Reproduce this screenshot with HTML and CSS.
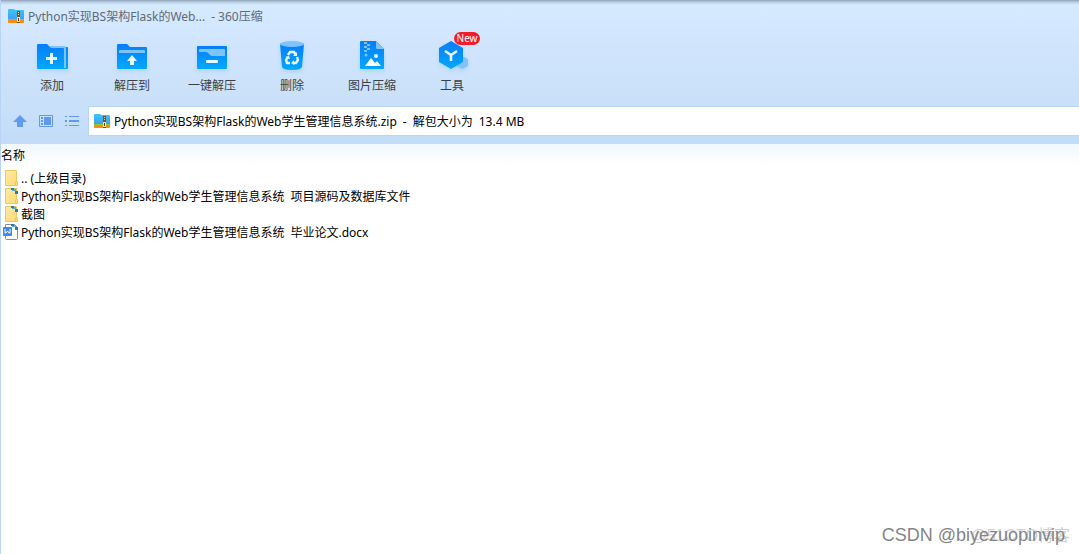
FILE: index.html
```html
<!DOCTYPE html>
<html lang="zh-CN">
<head>
<meta charset="utf-8">
<title>360压缩</title>
<link rel="stylesheet" href="styles.css">
</head>
<body>
<svg class="defs" aria-hidden="true">
  <defs>
    <linearGradient id="blue" x1="0" y1="0" x2="0" y2="1"><stop offset="0" stop-color="#087dfa"/><stop offset="1" stop-color="#00a8ff"/></linearGradient>
    <linearGradient id="sky" x1="0" y1="0" x2="0" y2="1"><stop offset="0" stop-color="#3fc4fa"/><stop offset="1" stop-color="#3b9df0"/></linearGradient>
    <linearGradient id="yellow" x1="0" y1="0" x2="1" y2="1"><stop offset="0" stop-color="#ffeaa5"/><stop offset="1" stop-color="#ffda72"/></linearGradient>
    <symbol id="archive" viewBox="0 0 16 16">
      <path d="M0 2q0-1 1-1h5l1 1h8q1 0 1 1v9H0z" fill="url(#sky)"/>
      <path d="M0 11h16v1H0z" fill="#8fca2c"/><path d="M0 12h16v2q0 1-1 1H1q-1 0-1-1z" fill="#f68b16"/>
      <path d="M9 3h3v12H9z" fill="#8a5018"/><path d="M10 4h1v1h-1zm0 2h1v1h-1z" fill="#f4c76a"/>
      <path d="M9 9h3v5H9z" fill="#ffe2a0"/><path d="M10 10h1v3h-1z" fill="#6b3a12"/>
    </symbol>
    <symbol id="folder" viewBox="0 0 16 18">
      <path d="M2.500 1.500h11v11h1v4h-12z" fill="url(#yellow)" stroke="#e8c765"/><path d="M12.500 12.500v4" stroke="#e8c765"/>
    </symbol>
    <symbol id="mark" viewBox="0 0 8 7">
      <path d="M0 0h3v2H0zm4 3h3v3H4z" fill="#1681c9"/><path d="M3 1h2v2H3zM1 2h2v1H1z" fill="#56add8"/>
    </symbol>
  </defs>
</svg>
<div class="window">
  <header class="chrome">
    <div class="titlebar">
      <svg class="app-icon"><use href="#archive"/></svg>
      <h1 class="title label"><span>Python实现BS架构Flask的Web...</span><span>- 360压缩</span></h1>
    </div>
    <nav class="toolbar" aria-label="工具栏">
      <button class="tool" type="button">
        <svg class="tool-icon" viewBox="0 0 34 34"><path d="M2 5q0-1 1-1h9l3 3h17q1 0 1 1v20q0 1-1 1H3q-1 0-1-1z" fill="url(#blue)"/><path d="M14 6h15q2 0 2 2v20h-2V9q0-1-1-1H16z" fill="#7fc3fd"/><path d="M15 13h3v4h4v3h-4v4h-3v-4h-4v-3h4z" fill="#e8f8ff"/></svg>
        <span>添加</span>
      </button>
      <button class="tool" type="button">
        <svg class="tool-icon" viewBox="0 0 34 34"><path d="M2 5q0-1 1-1h9l3 3h16q1 0 1 1v20q0 1-1 1H3q-1 0-1-1z" fill="url(#blue)"/><path d="M4 13v-2q0-1 1-1h24q1 0 1 1v2z" fill="#7fc3fd"/><path d="M17 15l5 6h-3v4h-4v-4h-3z" fill="#e8f8ff"/></svg>
        <span>解压到</span>
      </button>
      <button class="tool" type="button">
        <svg class="tool-icon" viewBox="0 0 34 34"><rect x="2" y="6" width="30" height="23" rx="1" fill="url(#blue)"/><path d="M4 12v-2q0-1 1-1h24q1 0 1 1v6H17q-1 0-2-1l-2-2q-1-1-2-1z" fill="#7fc3fd"/><rect x="11" y="20" width="12" height="3" rx="1" fill="#e8f8ff"/></svg>
        <span>一键解压</span>
      </button>
      <button class="tool" type="button">
        <svg class="tool-icon" viewBox="0 0 34 34"><path d="M5 4h24l-2 23q-1 3-10 3T7 27z" fill="url(#blue)"/><ellipse cx="17" cy="4" rx="12" ry="3" fill="#7fc3fd"/><g fill="none" stroke="#e8f8ff" stroke-width="2.400"><path d="M13 15l2-3h4l2 3M22 17l1 3-2 3h-3M15 23h-3l-1-3 2-3"/></g><path d="M22 12v4h-4zM19 20v5l-3-2zM10 17l4-1 1 3z" fill="#e8f8ff"/></svg>
        <span>删除</span>
      </button>
      <button class="tool" type="button">
        <svg class="tool-icon" viewBox="0 0 34 34"><path d="M5 2q0-1 1-1h15l8 8v19q0 1-1 1H6q-1 0-1-1z" fill="url(#blue)"/><path d="M21 1l8 8h-7q-1 0-1-1z" fill="#7fc3fd"/><path d="M9 2h3v2H9zm3 2h3v2h-3zM9 6h3v2H9zm3 2h3v2h-3zM9 10h3v2H9z" fill="#7fc3fd"/><circle cx="11" cy="15" r="1.500" fill="#7fc3fd"/><path d="M10 26l6-8 4 5 2-2 4 5z" fill="#fff"/><circle cx="21" cy="16" r="2" fill="#e8f8ff"/></svg>
        <span>图片压缩</span>
      </button>
      <button class="tool" type="button">
        <svg class="tool-icon" viewBox="0 0 34 34"><path d="M27 16l6 3v7l-6 3-6-3v-7z" fill="#7fc3fd"/><path d="M16 1l12 7v14l-12 7-12-7V8z" fill="url(#blue)"/><path d="M10 11l6 4 6-4M16 15v6" fill="none" stroke="#e8f8ff" stroke-width="2.600"/></svg>
        <span>工具</span>
        <span class="badge">New</span>
      </button>
    </nav>
    <div class="location">
      <div class="nav">
        <button class="nav-btn" type="button" aria-label="向上"><svg viewBox="0 0 16 16"><path d="M8 2l7 7h-4v5H5V9H1z" fill="#6199ef"/></svg></button>
        <button class="nav-btn" type="button" aria-label="预览"><svg viewBox="0 0 16 16"><path d="M1.500 2.500h13v11h-13z" fill="none" stroke="#6199ef"/><path d="M3 4h2v2H3zm0 3h2v2H3zm0 3h2v2H3zm3-6h7v8H6z" fill="#6199ef"/></svg></button>
        <button class="nav-btn" type="button" aria-label="列表"><svg viewBox="0 0 16 16"><path d="M1 3h2v1H1zm4 0h10v1H5zM1 7h2v2H1zm4 0h10v2H5zM1 12h2v1H1zm4 0h10v1H5z" fill="#6199ef"/></svg></button>
      </div>
      <div class="address">
        <svg class="app-icon"><use href="#archive"/></svg>
        <span class="label"><span>Python实现BS架构Flask的Web学生管理信息系统.zip</span><span>-</span><span>解包大小为</span><span>13.4 MB</span></span>
      </div>
    </div>
  </header>
  <main class="content">
    <h2 class="column">名称</h2>
    <ul class="files">
      <li class="file"><svg class="file-icon" viewBox="0 0 18 18"><use href="#folder" x="1" width="16" height="18"/></svg><span class="label">.. (上级目录)</span></li>
      <li class="file"><svg class="file-icon" viewBox="0 0 18 18"><use href="#folder" x="1" width="16" height="18"/><use href="#mark" x="9" y="1" width="8" height="7"/></svg><span class="label"><span>Python实现BS架构Flask的Web学生管理信息系统</span><span>项目源码及数据库文件</span></span></li>
      <li class="file"><svg class="file-icon" viewBox="0 0 18 18"><use href="#folder" x="1" width="16" height="18"/><use href="#mark" x="9" y="1" width="8" height="7"/></svg><span class="label">截图</span></li>
      <li class="file"><svg class="file-icon" viewBox="0 0 18 18"><path d="M3.500 1.500h9l3 3v11q0 1-1 1h-10q-1 0-1-1z" fill="#fff" stroke="#8b8e94"/><rect x="1" y="4" width="9" height="9" rx="1" fill="#4286ef"/><path d="M3 6v4h1l1.500-2L7 10h1V6" fill="none" stroke="#fff"/><use href="#mark" x="9" y="1" width="8" height="7"/></svg><span class="label"><span>Python实现BS架构Flask的Web学生管理信息系统</span><span>毕业论文.docx</span></span></li>
    </ul>
  </main>
  <div class="mark-back">@51CTO博客</div>
  <div class="mark-front">CSDN @biyezuopinvip</div>
</div>
</body>
</html>
```

FILE: styles.css
```css
* { box-sizing: border-box; }
body {
  margin: 0;
  font: 12px/18px "Noto Sans", "Noto Sans CJK SC", sans-serif;
  color: #000;
}
h1, h2, ul { margin: 0; padding: 0; font: inherit; list-style: none; }
button { margin: 0; padding: 0; border: 0; background: none; font: inherit; color: inherit; }
svg { display: block; }
.defs { position: absolute; width: 0; height: 0; }
.label { display: flex; gap: 6px; padding-top: 2px; white-space: nowrap; }
.window {
  position: relative;
  display: flex;
  flex-direction: column;
  min-height: 100vh;
  border-left: 1px solid #b9d5f5;
  background: #fff;
}
.chrome {
  padding-bottom: 8px;
  background:
    linear-gradient(#8ea2b7, #b9cde2 2px, transparent 5px),
    linear-gradient(#d6ebff, #d0e5fd 50px, #c9e0f9 105px, #c3ddf9 136px);
}
.titlebar { display: flex; align-items: center; gap: 4px; height: 32px; padding-left: 7px; }
.app-icon { flex: none; width: 16px; height: 16px; }
.title { color: #626a73; }
.toolbar { display: flex; height: 74px; padding: 8px 0 0 11px; }
.tool {
  position: relative;
  display: flex;
  flex-direction: column;
  align-items: center;
  gap: 3px;
  width: 80px;
  color: #3a3f46;
}
.tool-icon { width: 34px; height: 34px; filter: drop-shadow(0 2px 2px #88b9ec66); }
.badge {
  position: absolute;
  top: -8px;
  right: 12px;
  width: 26px;
  border-radius: 7px;
  background: #f21d2b;
  color: #fff;
  font-size: 10px;
  line-height: 13px;
}
.location { display: flex; }
.nav { display: flex; align-items: center; gap: 10px; width: 87px; padding-left: 11px; }
.nav-btn svg { width: 16px; height: 16px; }
.address {
  display: flex;
  flex: 1;
  align-items: center;
  gap: 4px;
  height: 30px;
  padding-left: 5px;
  border: 1px solid #b8d5f2;
  border-right: 0;
  background: #fff;
}
.content { flex: 1; background: linear-gradient(#f2f8fe, #fff 22px); }
.column { padding: 3px 0 4px; }
.file { display: flex; align-items: center; gap: 1px; height: 18px; padding-left: 1px; }
.file-icon { flex: none; width: 18px; height: 18px; }
.mark-back, .mark-front { position: absolute; white-space: nowrap; font-family: "Liberation Sans", "Noto Sans CJK SC", sans-serif; }
.mark-back { right: 9px; bottom: 8px; color: #d0d0d0; font-size: 16px; line-height: 20px; }
.mark-front { right: 14px; bottom: 8px; color: #858585; font-size: 18px; line-height: 22px; }
```
